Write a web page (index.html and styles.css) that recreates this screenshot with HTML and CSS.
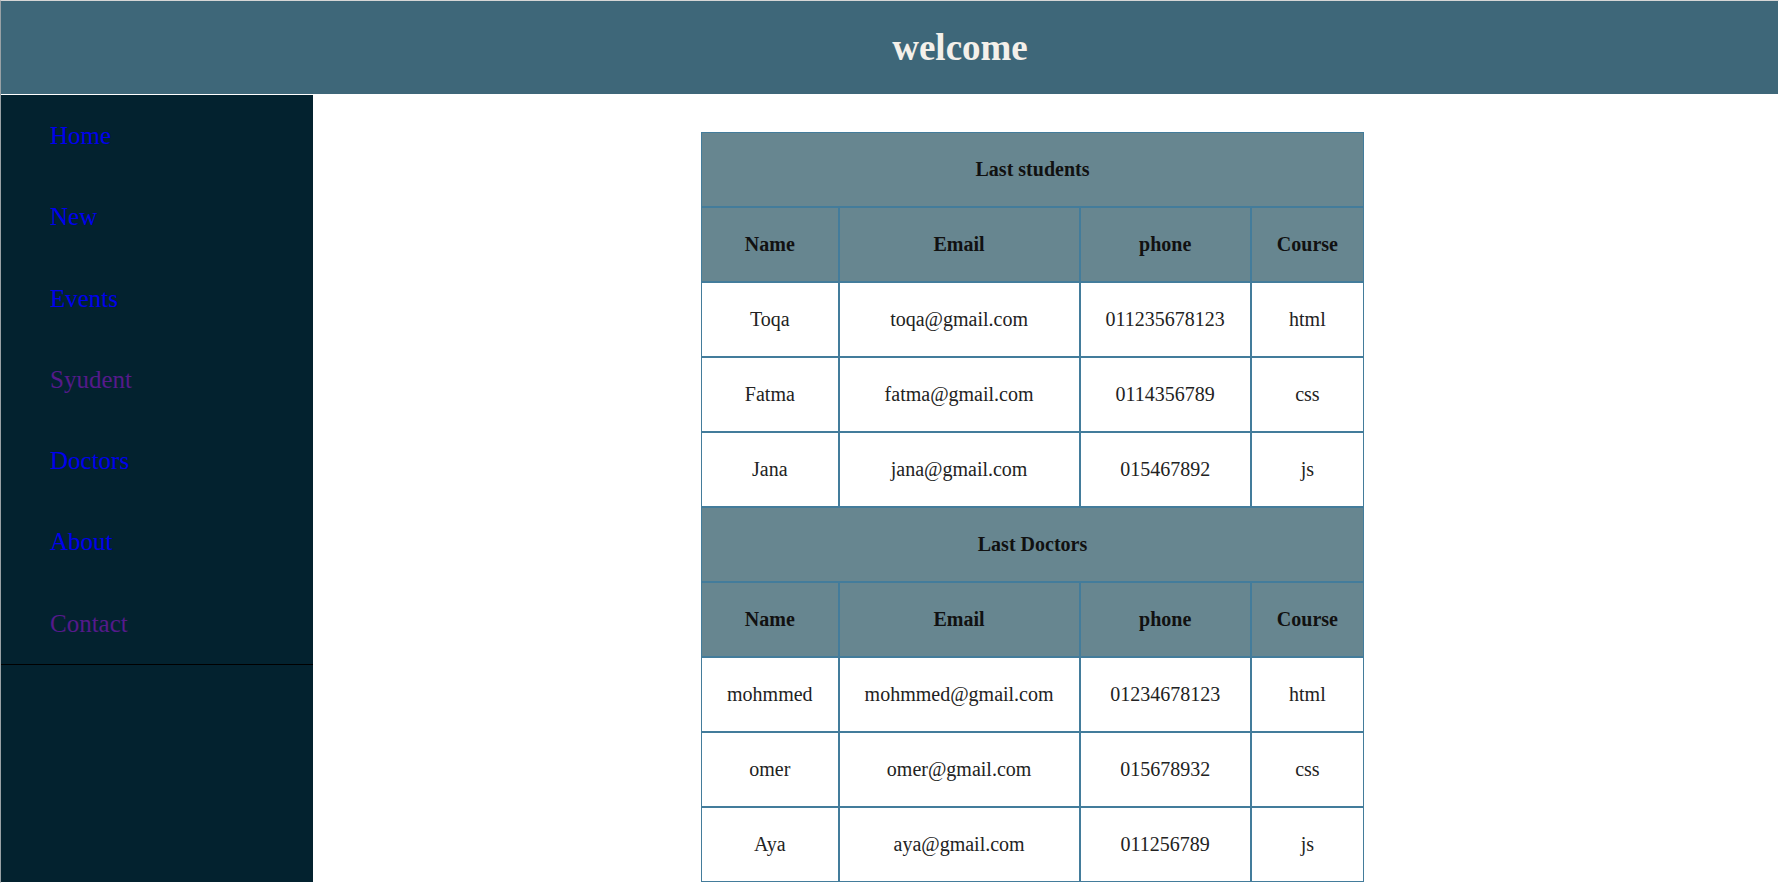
FILE: index.html
```html
<!DOCTYPE html>
<html lang="en">
<head>
<meta charset="utf-8">
<title>welcome</title>
<link rel="stylesheet" href="styles.css">
</head>
<body>
<div class="page">
  <header class="top">
    <h1 class="title">welcome</h1>
  </header>
  <div class="layout">
    <aside class="side">
      <ul class="nav">
        <li><a class="link" href="#home">Home</a></li>
        <li><a class="link" href="#new">New</a></li>
        <li><a class="link" href="#events">Events</a></li>
        <li><a class="link visited" href="#student">Syudent</a></li>
        <li><a class="link" href="#doctors">Doctors</a></li>
        <li><a class="link" href="#about">About</a></li>
        <li><a class="link visited" href="#contact">Contact</a></li>
      </ul>
    </aside>
    <main class="main">
      <table class="grid">
        <tr><th class="caption" colspan="4">Last students</th></tr>
        <tr><th>Name</th><th>Email</th><th>phone</th><th>Course</th></tr>
        <tr><td>Toqa</td><td>toqa@gmail.com</td><td>011235678123</td><td>html</td></tr>
        <tr><td>Fatma</td><td>fatma@gmail.com</td><td>0114356789</td><td>css</td></tr>
        <tr><td>Jana</td><td>jana@gmail.com</td><td>015467892</td><td>js</td></tr>
        <tr><th class="caption" colspan="4">Last Doctors</th></tr>
        <tr><th>Name</th><th>Email</th><th>phone</th><th>Course</th></tr>
        <tr><td>mohmmed</td><td>mohmmed@gmail.com</td><td>01234678123</td><td>html</td></tr>
        <tr><td>omer</td><td>omer@gmail.com</td><td>015678932</td><td>css</td></tr>
        <tr><td>Aya</td><td>aya@gmail.com</td><td>011256789</td><td>js</td></tr>
      </table>
    </main>
  </div>
</div>
</body>
</html>
```
FILE: styles.css
```css
html, body {
  margin: 0;
  padding: 0;
  height: 100%;
  overflow: hidden;
  background: #ffffff;
  font-family: "Liberation Serif", "Times New Roman", serif;
}

.page {
  box-sizing: border-box;
  height: 100vh;
  display: flex;
  flex-direction: column;
  border-top: 1px solid #d6d6d6;
  border-left: 1px solid rgba(120, 130, 136, 0.75);
  border-right: 1px solid rgba(255, 255, 255, 0.25);
  border-bottom: 1px solid rgba(255, 255, 255, 0.2);
}

.top {
  flex: 0 0 93px;
  margin-bottom: 1px;
  background: #3e6779;
  display: flex;
  align-items: center;
  justify-content: center;
  padding-left: 141px;
}

.title {
  margin: 0;
  font-size: 37px;
  font-weight: bold;
  color: #f4f0ea;
  line-height: 1;
}

.layout {
  flex: 1;
  display: flex;
  min-height: 0;
}

.side {
  flex: 0 0 312px;
  background: #03222f;
}

.nav {
  list-style: none;
  margin: 0;
  padding: 0;
  border-bottom: 1px solid #000000;
}

.nav li {
  line-height: 81.3px;
  height: 81.3px;
  padding-left: 49px;
  font-size: 25px;
}

.link {
  color: #0000ee;
  text-decoration: none;
}

.link.visited {
  color: #551a8b;
}

.main {
  flex: 1;
  padding: 37px 26px 0 0;
  display: flex;
  flex-direction: column;
  align-items: center;
}

.grid {
  border-collapse: separate;
  border-spacing: 0;
  font-size: 20px;
}

.grid th,
.grid td {
  border: 1px solid #437c9b;
  padding: 25px;
  text-align: center;
  line-height: 23px;
}

.grid th {
  background: #678690;
  color: #111111;
  font-weight: bold;
}

.grid td {
  background: #ffffff;
  color: #222222;
}
```
